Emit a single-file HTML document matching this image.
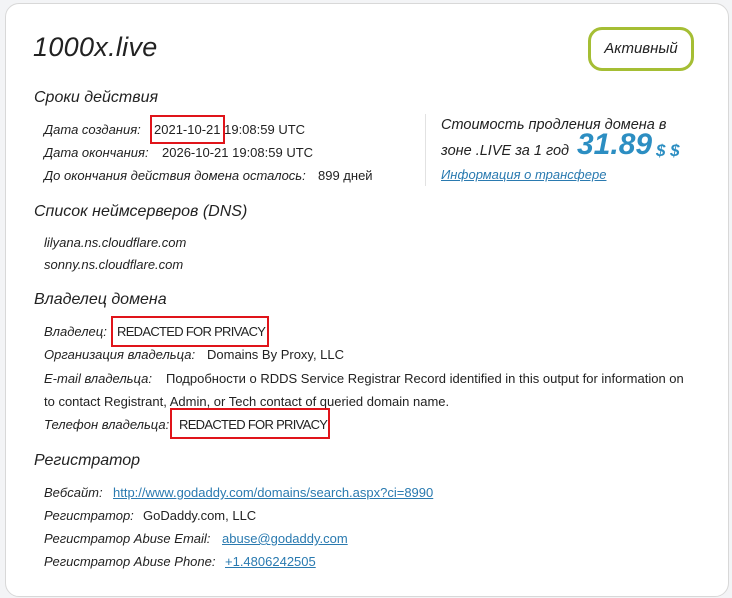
<!DOCTYPE html>
<html><head><meta charset="utf-8"><style>
body{margin:0;width:732px;height:598px;background:#f3f4f6;font-family:"Liberation Sans","DejaVu Sans",sans-serif;color:#222;position:relative;overflow:hidden}
.card{position:absolute;left:5px;top:3px;width:722px;height:592px;background:#fff;border:1px solid #d8d8d8;border-radius:14px}
.a{position:absolute;white-space:nowrap}
.t{font-size:27px;font-style:italic;color:#222;letter-spacing:0.3px}
.h{font-size:16px;font-style:italic;color:#222}
.l{font-size:13px;font-style:italic;color:#222}
.v{font-size:13px;color:#222}
.rd{letter-spacing:-0.7px}
a{color:#2a7ab0;text-decoration:underline}
.r{position:absolute;border:2.5px solid #e0141a;box-sizing:border-box}
</style></head><body>
<div class="card"></div>
<div class="a t" style="left:33px;top:32px">1000x.live</div>
<div class="a" style="left:588px;top:27px;width:106px;height:44px;border:3px solid #a5be34;border-radius:14px;box-sizing:border-box;font-style:italic;font-size:15px;line-height:38px;text-align:center">Активный</div>

<div class="a h" style="left:34px;top:89px">Сроки действия</div>
<div class="a l" style="left:44px;top:122px">Дата создания:</div>
<div class="a v" style="left:154px;top:122px">2021-10-21 19:08:59 UTC</div>
<div class="r" style="left:150px;top:115px;width:75px;height:29px"></div>
<div class="a l" style="left:44px;top:145px">Дата окончания:</div>
<div class="a v" style="left:162px;top:145px">2026-10-21 19:08:59 UTC</div>
<div class="a l" style="left:44px;top:168px">До окончания действия домена осталось:</div>
<div class="a v" style="left:318px;top:168px">899 дней</div>

<div class="a" style="left:425px;top:114px;width:1px;height:72px;background:#e2e2e2"></div>
<div class="a l" style="left:441px;top:117px;font-size:14.5px">Стоимость продления домена в</div>
<div class="a l" style="left:441px;top:143px;font-size:14.5px">зоне .LIVE за 1 год</div>
<div class="a" style="left:577px;top:128px;font-size:30px;font-weight:bold;font-style:italic;color:#2c8ec2">31.89</div>
<div class="a" style="left:656px;top:141px;font-size:17px;font-weight:bold;font-style:italic;color:#2c8ec2">$ $</div>
<div class="a l" style="left:441px;top:167px;font-size:13px"><a>Информация о трансфере</a></div>

<div class="a h" style="left:34px;top:203px">Список неймсерверов (DNS)</div>
<div class="a l" style="left:44px;top:235px">lilyana.ns.cloudflare.com</div>
<div class="a l" style="left:44px;top:257px">sonny.ns.cloudflare.com</div>

<div class="a h" style="left:34px;top:291px">Владелец домена</div>
<div class="a l" style="left:44px;top:324px">Владелец:</div>
<div class="a v rd" style="left:117px;top:324px">REDACTED FOR PRIVACY</div>
<div class="r" style="left:111px;top:316px;width:158px;height:31px"></div>
<div class="a l" style="left:44px;top:347px">Организация владельца:</div>
<div class="a v" style="left:207px;top:347px">Domains By Proxy, LLC</div>
<div class="a l" style="left:44px;top:371px">E-mail владельца:</div>
<div class="a v" style="left:166px;top:371px">Подробности о RDDS Service Registrar Record identified in this output for information on</div>
<div class="a v" style="left:44px;top:394px">to contact Registrant, Admin, or Tech contact of queried domain name.</div>
<div class="a l" style="left:44px;top:417px">Телефон владельца:</div>
<div class="a v rd" style="left:179px;top:417px">REDACTED FOR PRIVACY</div>
<div class="r" style="left:170px;top:408px;width:160px;height:31px"></div>

<div class="a h" style="left:34px;top:452px">Регистратор</div>
<div class="a l" style="left:44px;top:485px">Вебсайт:</div>
<div class="a v" style="left:113px;top:485px"><a>http://www.godaddy.com/domains/search.aspx?ci=8990</a></div>
<div class="a l" style="left:44px;top:508px">Регистратор:</div>
<div class="a v" style="left:143px;top:508px">GoDaddy.com, LLC</div>
<div class="a l" style="left:44px;top:531px">Регистратор Abuse Email:</div>
<div class="a v" style="left:222px;top:531px"><a>abuse@godaddy.com</a></div>
<div class="a l" style="left:44px;top:554px">Регистратор Abuse Phone:</div>
<div class="a v" style="left:225px;top:554px"><a>+1.4806242505</a></div>
</body></html>
